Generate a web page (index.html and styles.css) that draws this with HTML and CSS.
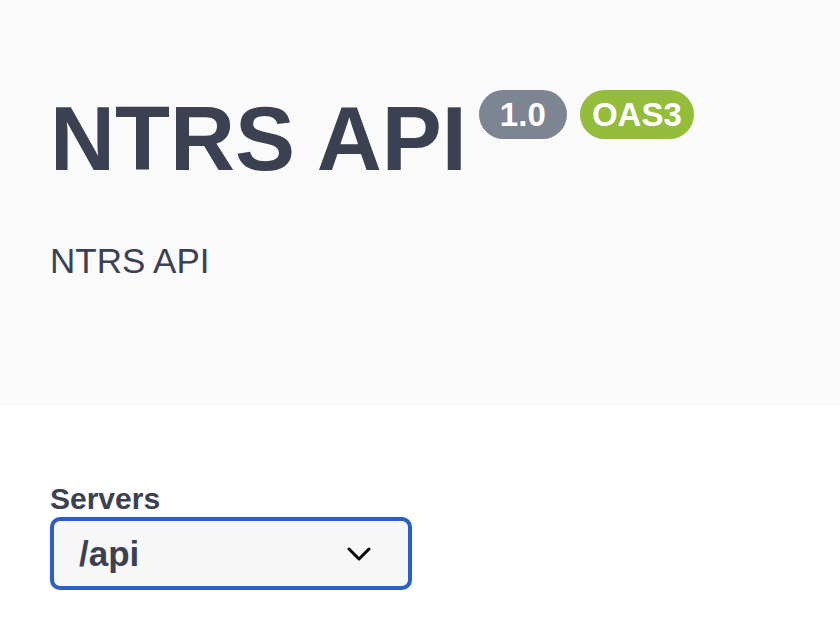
FILE: index.html
```html
<!DOCTYPE html>
<html lang="en">
<head>
<meta charset="utf-8">
<title>NTRS API</title>
<link rel="stylesheet" href="styles.css">
</head>
<body>
<div class="info-header">
  <div class="title-row">
    <h2 class="title">NTRS API</h2>
    <span class="badge badge-version">&#32;1.0&#32;</span>
    <span class="badge badge-oas">OAS3</span>
  </div>
  <p class="description">NTRS API</p>
</div>
<div class="servers">
  <div class="servers-title">Servers</div>
  <div class="select">
    <span class="select-value">/api</span>
    <svg class="chevron" width="24" height="14" viewBox="0 0 24 14" aria-hidden="true">
      <path d="M2 2 L12 12 L22 2" fill="none" stroke="#000" stroke-width="3" stroke-linecap="round" stroke-linejoin="round"/>
    </svg>
  </div>
</div>
</body>
</html>
```
FILE: styles.css
```css
html, body {
  margin: 0;
  padding: 0;
  background: #ffffff;
  font-family: "Liberation Sans", Arial, sans-serif;
  color: #3b4151;
}

.info-header {
  background: #fafafa;
  height: 406px;
  box-sizing: border-box;
  padding: 94px 0 0 50px;
}

.title-row {
  display: flex;
  align-items: flex-start;
}

.title {
  margin: 0;
  font-size: 90px;
  line-height: 90px;
  font-weight: 700;
  color: #3b4151;
}

.badge {
  display: inline-block;
  margin-top: -4px;
  padding: 5px 12px;
  font-size: 33px;
  line-height: 39px;
  font-weight: 700;
  color: #ffffff;
  border-radius: 30px;
  white-space: pre;
}

.badge-version {
  background: #7d8492;
  margin-left: 12px;
}

.badge-oas {
  background: #93bd3a;
  margin-left: 13px;
}

.description {
  margin: 57px 0 0 0;
  font-size: 35px;
  line-height: 40px;
  font-weight: 400;
  color: #3b4151;
}

.servers {
  padding: 75px 0 0 50px;
}

.servers-title {
  font-size: 30px;
  line-height: 35px;
  font-weight: 700;
  color: #3b4151;
}

.select {
  margin-top: 1px;
  width: 362px;
  height: 73px;
  box-sizing: border-box;
  border: 4px solid #2c5fc6;
  border-radius: 10px;
  background: #f7f7f7;
  box-shadow: 0 1px 3px rgba(0, 0, 0, 0.12);
  display: flex;
  align-items: center;
  justify-content: space-between;
  padding: 0 37px 0 25px;
}

.select-value {
  font-size: 35px;
  line-height: 40px;
  font-weight: 700;
  color: #3b4151;
}

.chevron {
  display: block;
}
```
